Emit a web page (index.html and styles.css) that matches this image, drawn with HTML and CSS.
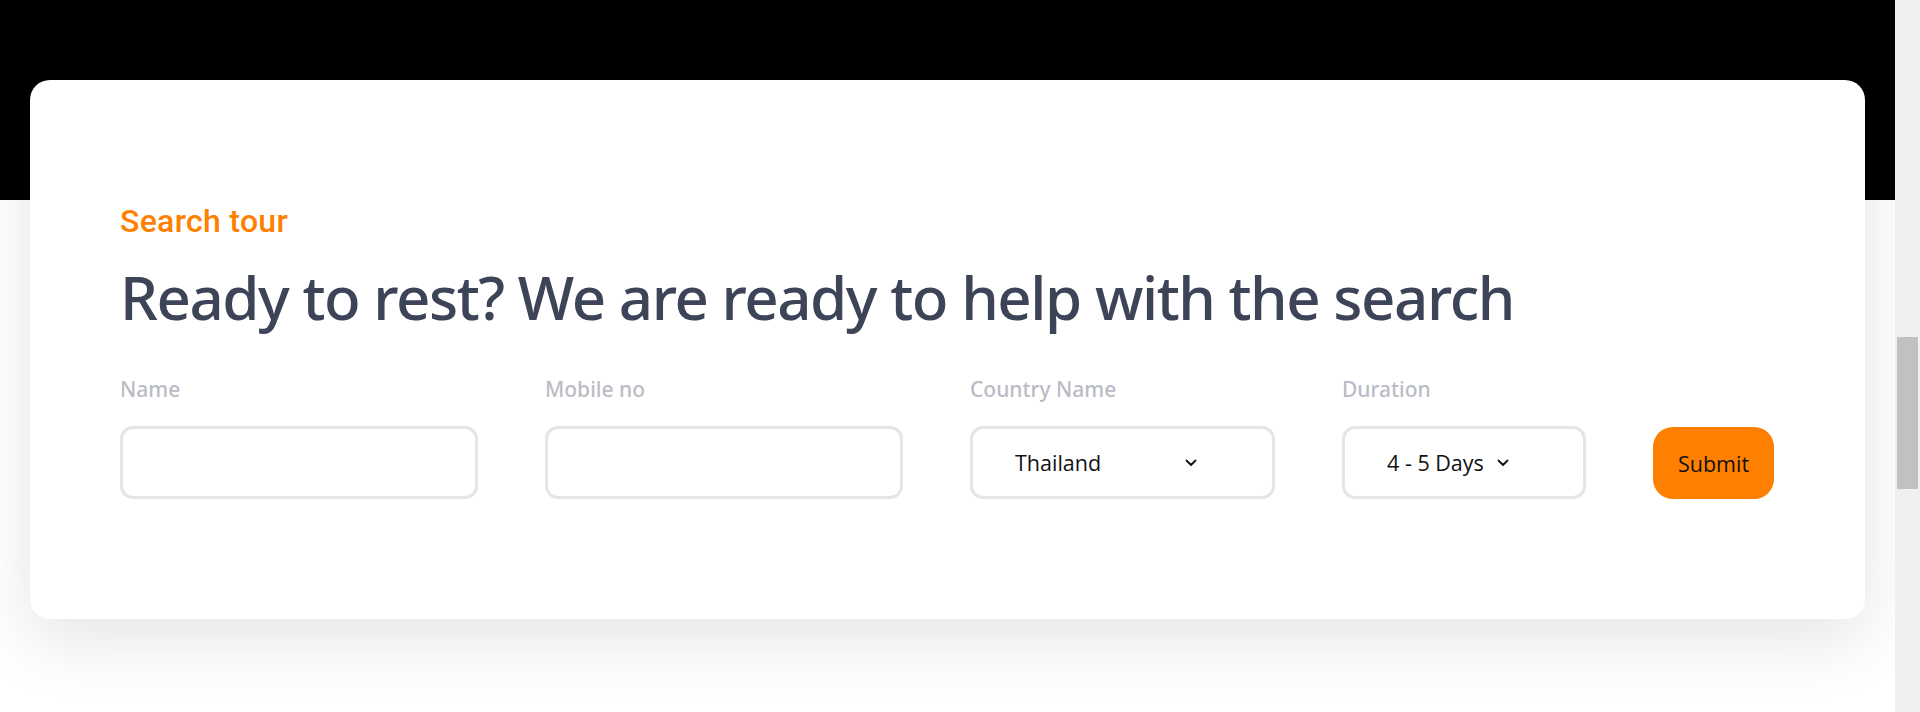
FILE: index.html
```html
<!DOCTYPE html>
<html lang="en">
<head>
<meta charset="utf-8">
<title>Search tour</title>
<link rel="stylesheet" href="styles.css">
</head>
<body>
<div class="page">
  <main class="main">
    <section class="card">
      <p class="eyebrow">Search tour</p>
      <h1 class="title">Ready to rest? We are ready to help with the search</h1>
      <form class="form">
        <div class="field field-name">
          <label class="label">Name</label>
          <div class="box"></div>
        </div>
        <div class="field field-mobile">
          <label class="label">Mobile no</label>
          <div class="box"></div>
        </div>
        <div class="field field-country">
          <label class="label">Country Name</label>
          <div class="box select">
            <span class="select-inner select-country">
              <span>Thailand</span>
              <svg class="chev" width="12" height="8" viewBox="0 0 12 8"><path d="M1.5 1.5L6 6l4.5-4.5" fill="none" stroke="#111" stroke-width="1.8" stroke-linecap="round" stroke-linejoin="round"/></svg>
            </span>
          </div>
        </div>
        <div class="field field-duration">
          <label class="label">Duration</label>
          <div class="box select">
            <span class="select-inner select-duration">
              <span>4 - 5 Days</span>
              <svg class="chev" width="12" height="8" viewBox="0 0 12 8"><path d="M1.5 1.5L6 6l4.5-4.5" fill="none" stroke="#111" stroke-width="1.8" stroke-linecap="round" stroke-linejoin="round"/></svg>
            </span>
          </div>
        </div>
        <button type="button" class="submit">Submit</button>
      </form>
    </section>
  </main>
  <div class="scrollbar"><div class="thumb"></div></div>
</div>
</body>
</html>
```

FILE: styles.css
```css
html, body {
  margin: 0;
  padding: 0;
  height: 712px;
  overflow: hidden;
}

body {
  font-family: "Open Sans", "Noto Sans", sans-serif;
  background: #ffffff;
}

.page {
  display: flex;
  height: 712px;
}

.main {
  flex: 1;
  background: linear-gradient(#000 0, #000 200px, #ffffff 200px);
  padding: 80px 30px 0 30px;
  overflow: hidden;
}

.card {
  background: #fff;
  border-radius: 20px;
  height: 539px;
  box-sizing: border-box;
  padding: 122px 90px 0 90px;
  box-shadow: 0 20px 70px rgba(0, 0, 0, 0.11);
}

.eyebrow {
  margin: 0;
  font-family: Roboto, sans-serif;
  font-weight: 500;
  font-size: 32px;
  line-height: 38px;
  letter-spacing: 0.3px;
  color: #ff7f00;
}

.title {
  margin: 21px 0 0 0;
  font-family: "Noto Sans", "Open Sans", sans-serif;
  font-weight: 500;
  font-size: 60px;
  line-height: 72px;
  color: #3e4458;
  letter-spacing: -1.45px;
  white-space: nowrap;
}

.form {
  display: flex;
  align-items: flex-end;
  gap: 67px;
  margin-top: 43px;
}

.field {
  display: flex;
  flex-direction: column;
  gap: 24px;
}

.field-name, .field-mobile { width: 358px; }
.field-country { width: 305px; }
.field-duration { width: 244px; }

.label {
  font-family: "Noto Sans", "Open Sans", sans-serif;
  font-size: 21px;
  font-weight: 500;
  line-height: 26px;
  color: #babcc5;
}

.box {
  height: 73px;
  box-sizing: border-box;
  border: 3px solid #e5e5e5;
  border-radius: 13px;
  background: #fff;
}

.select {
  display: flex;
  align-items: center;
  padding-left: 42px;
}

.select-inner {
  display: flex;
  align-items: center;
  justify-content: space-between;
  font-size: 21.5px;
  color: #111;
}

.select-country { width: 182px; }
.select-duration { width: 122px; }

.chev { display: block; }

.submit {
  width: 121px;
  height: 72px;
  border: none;
  border-radius: 20px;
  background: #ff7f00;
  color: #111;
  font-family: "Open Sans", "Noto Sans", sans-serif;
  font-size: 21.5px;
  padding: 0;
  margin-bottom: 0;
}

.scrollbar {
  width: 25px;
  background: #f0f0f0;
  padding: 337px 2px 0 2px;
  box-sizing: border-box;
}

.thumb {
  height: 152px;
  background: #c1c1c1;
}
```
